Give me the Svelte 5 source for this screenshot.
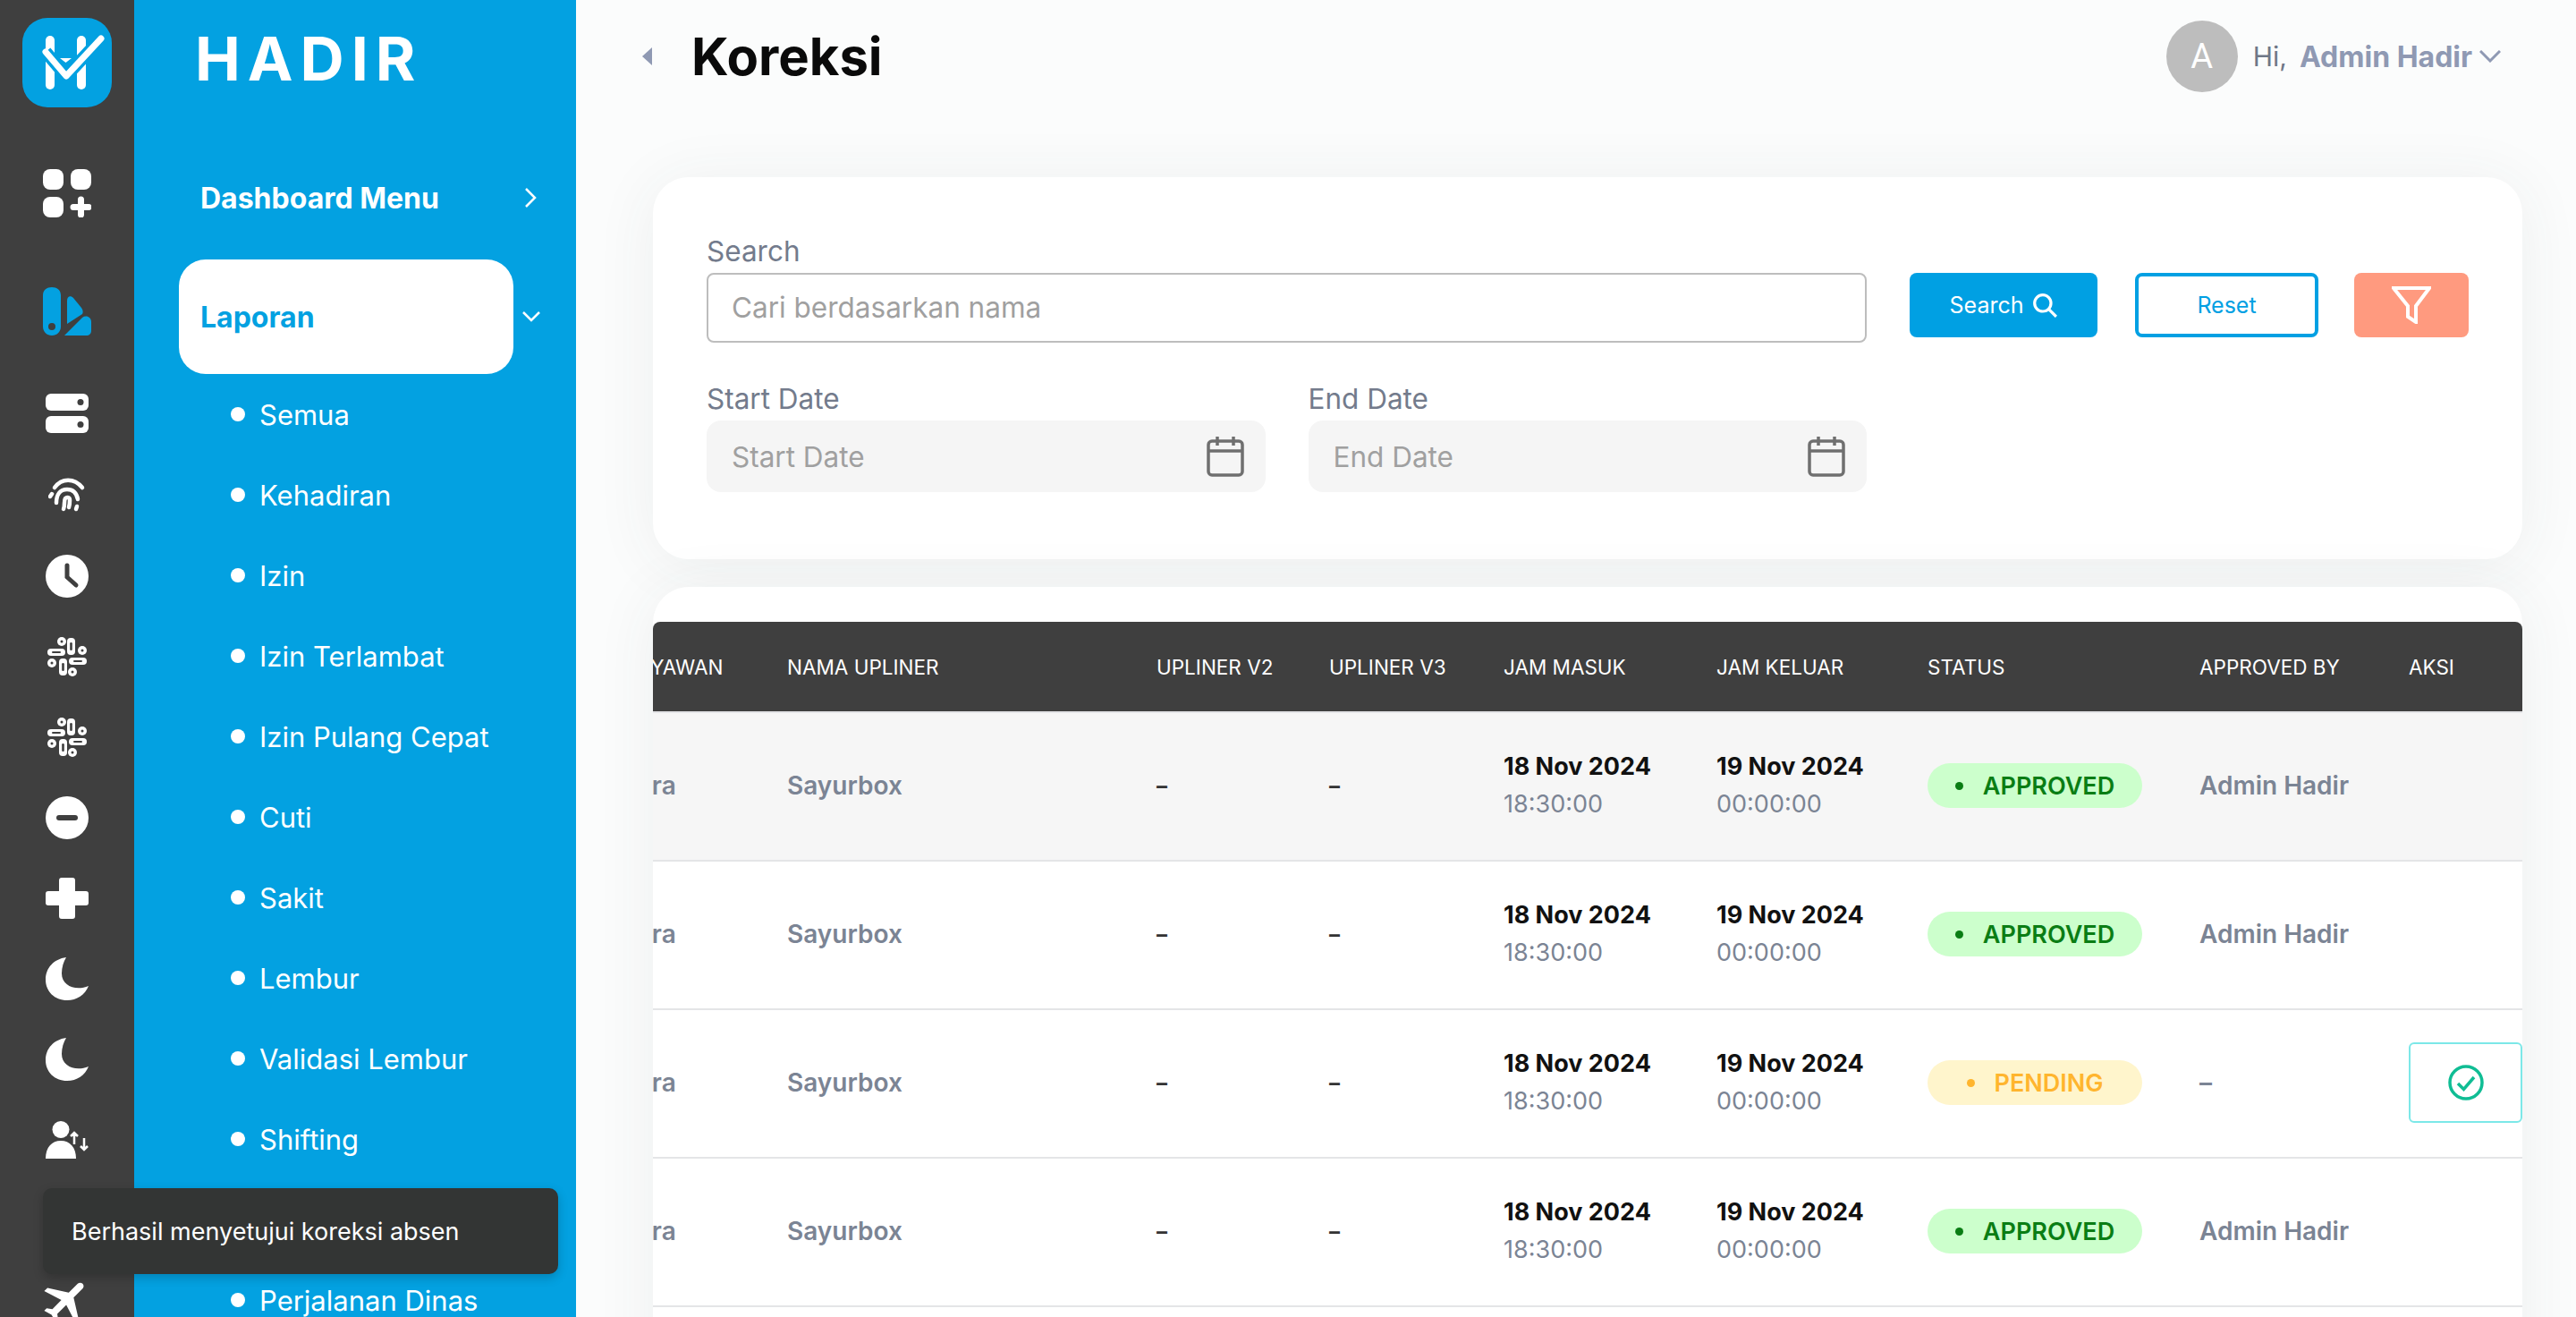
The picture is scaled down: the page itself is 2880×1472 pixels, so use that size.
<script>
  const submenu = ['Semua', 'Kehadiran', 'Izin', 'Izin Terlambat', 'Izin Pulang Cepat', 'Cuti', 'Sakit', 'Lembur', 'Validasi Lembur', 'Shifting', '', 'Perjalanan Dinas'];
  const rows = [
    { status: 'APPROVED', by: 'Admin Hadir' },
    { status: 'APPROVED', by: 'Admin Hadir' },
    { status: 'PENDING', by: '–' },
    { status: 'APPROVED', by: 'Admin Hadir' },
    { status: 'APPROVED', by: 'Admin Hadir' }
  ];
  const slackPills = [
    [22, 1, 9, 19], [24, 23, 20, 8], [13, 24, 9, 19], [0, 13, 20, 8]
  ];
  const slackDots = [[16, 5], [39, 15], [28, 39], [5, 29]];
</script>

{#snippet slack()}
  <svg class="ic" width="44" height="44" viewBox="0 0 44 44">
    {#each slackPills as p}
      <rect x={p[0]} y={p[1]} width={p[2]} height={p[3]} rx="4" fill="#fff" />
      {#if p[2] < p[3]}
        <rect x={p[0] + 3.2} y={p[1] + 5} width="2.6" height={p[3] - 10} rx="1.3" fill="#3f3f3f" />
      {:else}
        <rect x={p[0] + 5} y={p[1] + 2.9} width={p[2] - 10} height="2.2" rx="1.1" fill="#3f3f3f" />
      {/if}
    {/each}
    {#each slackDots as d}
      <circle cx={d[0]} cy={d[1]} r="5" fill="#fff" />
      <circle cx={d[0]} cy={d[1]} r="1.5" fill="#3f3f3f" />
    {/each}
  </svg>
{/snippet}

{#snippet moon()}
  <svg class="ic" width="48" height="48" viewBox="0 0 48 48">
    <path d="M23 0C9 2 0 12 0 25c0 13 10 23 24 23 11 0 20-6 24-16-14 6-30 0-30-14 0-7 2-13 5-18z" fill="#fff" />
  </svg>
{/snippet}

{#snippet calendar()}
  <svg width="42" height="46" viewBox="0 0 42 46" fill="none" stroke="#6f6f6f" stroke-width="3.5">
    <rect x="2" y="6" width="38" height="38" rx="4" />
    <path d="M2 17h38M12 1v10M30 1v10" />
  </svg>
{/snippet}

<div class="app">
  <nav class="rail">
    <div class="logo">
      <svg width="100" height="100" viewBox="0 0 100 100">
        <rect x="26" y="20" width="10" height="60" rx="5" fill="#fff" />
        <rect x="61" y="20" width="10" height="60" rx="5" fill="#fff" />
        <path d="M42 45h13l-6.500 5z" fill="#fff" />
        <path d="M26 38l23 27 39-42" fill="none" stroke="#03a1e1" stroke-width="14" />
        <path d="M26 38l23 27 39-42" fill="none" stroke="#fff" stroke-width="7" stroke-linecap="round" stroke-linejoin="round" />
      </svg>
    </div>
    <div class="cell first">
      <svg class="ic" width="54" height="54" viewBox="0 0 54 54" fill="#fff">
        <rect width="23" height="23" rx="8" />
        <rect x="31" width="23" height="23" rx="8" />
        <rect y="31" width="23" height="23" rx="8" />
        <path d="M42.500 34v17M34 42.500h17" stroke="#fff" stroke-width="7" stroke-linecap="round" />
      </svg>
    </div>
    <div class="cell second">
      <svg class="ic" width="54" height="54" viewBox="0 0 54 54" fill="#03a1e1">
        <path fill-rule="evenodd" d="M10 0c5.500 0 10 3 10 9v35c0 6-4.500 10-10 10S0 50 0 44V9c0-6 4.500-9 10-9zm0 40a4 4 0 100 8 4 4 0 000-8z" />
        <path d="M27 15c0-5 4-6 7-3l9 11c2 3 2 5 1 7L27 41z" />
        <path d="M24 54l20-20c4-3 10-1 10 5v9c0 4-2 6-6 6z" />
      </svg>
    </div>
    <div class="cell third">
      <svg class="ic" width="48" height="44" viewBox="0 0 48 44">
        <rect width="48" height="19" rx="6" fill="#fff" />
        <rect y="25" width="48" height="19" rx="6" fill="#fff" />
        <circle cx="39" cy="9.500" r="3.500" fill="#3f3f3f" />
        <circle cx="39" cy="34.500" r="3.500" fill="#3f3f3f" />
      </svg>
    </div>
    <div class="cell nudge">
      <svg class="ic" width="42" height="38" viewBox="0 0 42 38" fill="none" stroke="#fff" stroke-width="4.500" stroke-linecap="round">
        <path d="M7 11C15 0 29 0 38 11" />
        <path d="M2 21l2-3" />
        <path d="M9 28c0-9 4-15 12-15s11 6 12 11" />
        <path d="M17 35c2-5 0-9 2-12 2-2 5-1 5 2s0 5-1 8" />
        <path d="M31 35l1-3" />
      </svg>
    </div>
    <div class="cell nudge">
      <svg class="ic" width="48" height="48" viewBox="0 0 48 48">
        <circle cx="24" cy="24" r="24" fill="#fff" />
        <path d="M24 12v13l10 9" fill="none" stroke="#3f3f3f" stroke-width="5" stroke-linecap="round" />
      </svg>
    </div>
    <div class="cell">{@render slack()}</div>
    <div class="cell">{@render slack()}</div>
    <div class="cell">
      <svg class="ic" width="48" height="48" viewBox="0 0 48 48">
        <circle cx="24" cy="24" r="24" fill="#fff" />
        <rect x="12" y="21" width="24" height="6" rx="3" fill="#3f3f3f" />
      </svg>
    </div>
    <div class="cell">
      <svg class="ic" width="48" height="46" viewBox="0 0 48 46">
        <path d="M15 3c0-2 1-3 3-3h12c2 0 3 1 3 3v12h12c2 0 3 1 3 3v10c0 2-1 3-3 3H33v12c0 2-1 3-3 3H18c-2 0-3-1-3-3V31H3c-2 0-3-1-3-3V18c0-2 1-3 3-3h12z" fill="#fff" />
      </svg>
    </div>
    <div class="cell">{@render moon()}</div>
    <div class="cell">{@render moon()}</div>
    <div class="cell">
      <svg class="ic" width="48" height="42" viewBox="0 0 48 42" fill="#fff">
        <circle cx="17" cy="9.500" r="9.500" />
        <path d="M0 42c0-13 7-20 17-20s17 7 17 20z" />
        <path d="M32 26V13M28 17l4-4 4 4M43 19v13M39 28l4 4 4-4" fill="none" stroke="#fff" stroke-width="2.500" />
      </svg>
    </div>
    <div class="cell"></div>
    <div class="cell">
      <svg class="ic" width="62" height="62" viewBox="0 0 24 24">
        <path transform="rotate(45 12 12)" d="M21 16v-2l-8-5V3.500c0-.83-.67-1.500-1.500-1.500S10 2.670 10 3.500V9l-8 5v2l8-2.500V19l-2 1.500V22l3.500-1 3.500 1v-1.500L13 19v-5.500l8 2.500z" fill="#fff" />
      </svg>
    </div>
  </nav>

  <aside class="side">
    <div class="brand">HADIR</div>
    <div class="menu-row">
      <span class="menu-label">Dashboard Menu</span>
      <svg class="chev" width="14" height="24" viewBox="0 0 14 24" fill="none" stroke="#fff" stroke-width="2.500"><path d="M2 2l10 10L2 22" /></svg>
    </div>
    <div class="menu-row open">
      <span class="pill">Laporan</span>
      <svg class="chev" width="20" height="12" viewBox="0 0 20 12" fill="none" stroke="#fff" stroke-width="2.500"><path d="M1 1l9 9 9-9" /></svg>
    </div>
    <ul class="sub">
      {#each submenu as item}
        <li><span class="dot"></span>{item}</li>
      {/each}
    </ul>
  </aside>

  <main class="main">
    <header class="top">
      <span class="back"></span>
      <h1>Koreksi</h1>
      <div class="user">
        <span class="avatar">A</span>
        <span class="hi">Hi,</span>
        <span class="name">Admin Hadir</span>
        <svg width="24" height="14" viewBox="0 0 24 14" fill="none" stroke="#8f99b3" stroke-width="3"><path d="M1 1l11 11L23 1" /></svg>
      </div>
    </header>

    <section class="card filters">
      <div class="fields">
        <label class="field">
          <span>Search</span>
          <input class="search" placeholder="Cari berdasarkan nama" />
        </label>
        <div class="dates">
          <div class="field">
            <span>Start Date</span>
            <div class="date"><em>Start Date</em>{@render calendar()}</div>
          </div>
          <div class="field">
            <span>End Date</span>
            <div class="date"><em>End Date</em>{@render calendar()}</div>
          </div>
        </div>
      </div>
      <div class="actions">
        <button class="btn primary">
          Search
          <svg width="28" height="28" viewBox="0 0 26 26" fill="none" stroke="#fff" stroke-width="3"><circle cx="11" cy="11" r="8.500" /><path d="M17 17l8 8" /></svg>
        </button>
        <button class="btn outline">Reset</button>
        <button class="btn funnel" aria-label="Filter">
          <svg width="44" height="42" viewBox="0 0 44 42" fill="none" stroke="#fff" stroke-width="4"><path d="M2 2h40L27 22v18l-9-6V22z" /></svg>
        </button>
      </div>
    </section>

    <section class="card listing">
      <div class="scroller">
        <table>
          <colgroup>
            <col style="width:272px" /><col style="width:413px" /><col style="width:193px" /><col style="width:195px" /><col style="width:238px" /><col style="width:236px" /><col style="width:304px" /><col style="width:234px" /><col style="width:127px" />
          </colgroup>
          <thead>
            <tr>
              <th>NAMA KARYAWAN</th><th>NAMA UPLINER</th><th>UPLINER V2</th><th>UPLINER V3</th><th>JAM MASUK</th><th>JAM KELUAR</th><th>STATUS</th><th>APPROVED BY</th><th>AKSI</th>
            </tr>
          </thead>
          <tbody>
            {#each rows as row, i}
              <tr class:shade={i === 0}>
                <td class="muted">Aji Saputra</td>
                <td class="muted">Sayurbox</td>
                <td class="dash">–</td>
                <td class="dash">–</td>
                <td><b>18 Nov 2024</b><small>18:30:00</small></td>
                <td><b>19 Nov 2024</b><small>00:00:00</small></td>
                <td>
                  <span class="status" class:pending={row.status === 'PENDING'}><i></i>{row.status}</span>
                </td>
                <td class="muted">{row.by}</td>
                <td>
                  {#if row.status === 'PENDING'}
                    <button class="approve" aria-label="Setujui">
                      <svg width="40" height="40" viewBox="0 0 40 40" fill="none" stroke="#10bd94" stroke-width="3.500"><circle cx="20" cy="20" r="18" /><path d="M11 21l6.500 6.500L29 14" /></svg>
                    </button>
                  {/if}
                </td>
              </tr>
            {/each}
          </tbody>
        </table>
      </div>
    </section>
  </main>

  <div class="toast">Berhasil menyetujui koreksi absen</div>
</div>

<style>
  :global(body) {
    font-family: 'Inter', sans-serif;
    background: #fbfcfc;
  }

  .app {
    display: flex;
    height: 100vh;
    overflow: hidden;
    position: relative;
  }

  /* icon rail */
  .rail {
    width: 150px;
    flex: none;
    background: #3f3f3f;
    display: flex;
    flex-direction: column;
    align-items: center;
    padding-top: 20px;
  }

  .logo {
    width: 100px;
    height: 100px;
    flex: none;
    background: #03a1e1;
    border-radius: 28px;
  }

  .cell {
    height: 90px;
    flex: none;
    display: flex;
    align-items: center;
    justify-content: center;
  }

  .cell.first { margin-top: 51px; }
  .cell.second { margin-top: 42px; }
  .cell.third { margin-top: 24px; }
  .cell.nudge { margin-top: 1px; }

  .ic { display: block; }

  /* blue menu */
  .side {
    width: 494px;
    flex: none;
    background: #03a1e1;
    color: #fff;
  }

  .brand {
    height: 132px;
    padding: 24px 0 0 68px;
    box-sizing: border-box;
    font-size: 68px;
    line-height: 82px;
    font-weight: 700;
    letter-spacing: 8px;
  }

  .menu-row {
    display: flex;
    align-items: center;
    height: 178px;
    margin-bottom: -20px;
    padding-left: 74px;
    position: relative;
    box-sizing: border-box;
  }

  .menu-row.open {
    height: 128px;
    padding-left: 50px;
    margin-bottom: 0;
  }

  .menu-label {
    font-size: 32px;
    font-weight: 700;
  }

  .pill {
    width: 374px;
    height: 128px;
    box-sizing: border-box;
    padding-left: 24px;
    display: flex;
    align-items: center;
    background: #fff;
    color: #03a1e1;
    border-radius: 30px;
    font-size: 32px;
    font-weight: 700;
  }

  .chev {
    position: absolute;
    left: 436px;
    top: 50%;
    transform: translateY(-50%);
  }

  .menu-row.open .chev { left: 434px; }

  .sub {
    list-style: none;
    margin: 0;
    padding: 0 0 0 108px;
  }

  .sub li {
    height: 90px;
    display: flex;
    align-items: center;
    font-size: 31px;
  }

  .dot {
    width: 16px;
    height: 16px;
    border-radius: 50%;
    background: #fff;
    margin-right: 16px;
  }

  /* main column */
  .main {
    flex: 1;
    min-width: 0;
    padding: 0 60px 0 86px;
  }

  .top {
    height: 126px;
    display: flex;
    align-items: center;
    margin-bottom: 72px;
    margin-left: -12px;
    margin-right: 24px;
  }

  .back {
    width: 0;
    height: 0;
    border: 10px solid transparent;
    border-left: 0;
    border-right: 11px solid #8f99b3;
    margin-right: 44px;
  }

  h1 {
    margin: 0;
    font-size: 58px;
    font-weight: 700;
    color: #0a0a0a;
  }

  .user {
    margin-left: auto;
    display: flex;
    align-items: center;
    font-size: 32px;
  }

  .avatar {
    width: 80px;
    height: 80px;
    border-radius: 50%;
    background: #bdbdbd;
    color: #fff;
    display: flex;
    align-items: center;
    justify-content: center;
    font-family: 'Roboto', sans-serif;
    font-size: 38px;
    margin-right: 17px;
  }

  .hi {
    color: #6f7787;
    font-size: 30px;
    margin-right: 14px;
  }

  .name {
    color: #8f99b3;
    font-weight: 700;
    margin-right: 8px;
  }

  .card {
    background: #fff;
    border-radius: 40px;
    box-shadow: 0 6px 70px rgba(60, 70, 70, 0.07);
  }

  .filters {
    height: 427px;
    box-sizing: border-box;
    padding: 65px 60px 0;
    display: flex;
    justify-content: space-between;
    margin-bottom: 31px;
  }

  .fields {
    width: 1297px;
    display: flex;
    flex-direction: column;
    gap: 45px;
  }

  .field {
    display: flex;
    flex-direction: column;
    gap: 6px;
  }

  .field > span {
    font-size: 31.5px;
    line-height: 36px;
    color: #737b8c;
  }

  .search {
    height: 78px;
    box-sizing: border-box;
    border: 2px solid #bdbdbd;
    border-radius: 8px;
    padding: 0 26px 2px;
    font: 31.5px 'Inter', sans-serif;
    outline: none;
  }

  .search::placeholder { color: #a0a0a0; opacity: 1; }

  .dates {
    display: flex;
    gap: 48px;
  }

  .dates .field { flex: 1; }

  .date {
    height: 80px;
    background: #f5f5f5;
    border-radius: 16px;
    padding: 0 24px 0 28px;
    display: flex;
    align-items: center;
    justify-content: space-between;
  }

  .date em {
    font-style: normal;
    font-size: 31.5px;
    color: #a0a0a0;
  }

  .actions {
    display: flex;
    gap: 40px;
    margin-top: 42px;
    align-items: flex-start;
  }

  .btn {
    height: 72px;
    width: 205px;
    box-sizing: border-box;
    border-radius: 8px;
    border: 0;
    font: 25px 'Inter', sans-serif;
    display: flex;
    align-items: center;
    justify-content: center;
    gap: 10px;
  }

  .primary {
    width: 210px;
    background: #00a0e3;
    color: #fff;
  }

  .outline {
    background: #fff;
    border: 4px solid #00a0e3;
    color: #00a0e3;
    margin-left: 2px;
  }

  .funnel {
    width: 128px;
    background: #ff9a7f;
  }

  .listing {
    padding-top: 39px;
    height: 900px;
    border-bottom-left-radius: 0;
    border-bottom-right-radius: 0;
  }

  .scroller {
    overflow: hidden;
    border-radius: 8px 8px 0 0;
  }

  table {
    table-layout: fixed;
    border-collapse: collapse;
    width: 2212px;
    margin-left: -122px;
  }

  th {
    background: #3f3f3f;
    color: #fff;
    height: 100px;
    padding: 0;
    text-align: left;
    font-size: 22.5px;
    font-weight: 400;
    white-space: nowrap;
  }

  td {
    height: 166px;
    padding: 0 0 2px;
    box-sizing: border-box;
    border-bottom: 2px solid #e4e5e7;
    border-top: 2px solid #e4e5e7;
    font-size: 27px;
    white-space: nowrap;
    vertical-align: middle;
  }

  tr.shade td { background: #f6f6f6; }

  .muted {
    font-size: 28px;
    font-weight: 600;
    color: #7b8494;
  }

  .dash {
    font-size: 24px;
    font-weight: 700;
    color: #333;
  }

  td b {
    display: block;
    font-weight: 700;
    color: #111;
    line-height: 42px;
  }

  td small {
    display: block;
    font-size: 27px;
    color: #7b8494;
    line-height: 42px;
  }

  .status {
    width: 240px;
    height: 50px;
    border-radius: 25px;
    background: #ccffcc;
    color: #0a7d14;
    font-weight: 600;
    display: flex;
    align-items: center;
    justify-content: center;
    gap: 22px;
  }

  .status i {
    width: 9px;
    height: 9px;
    border-radius: 50%;
    background: currentColor;
  }

  .status.pending {
    background: #fff5cc;
    color: #ffb52e;
  }

  .approve {
    width: 127px;
    height: 90px;
    display: flex;
    align-items: center;
    justify-content: center;
    background: #fff;
    border: 2px solid #7ce8e8;
    border-radius: 6px;
    padding: 0;
  }

  .toast {
    position: absolute;
    left: 48px;
    top: 1328px;
    width: 576px;
    height: 96px;
    box-sizing: border-box;
    padding-left: 32px;
    display: flex;
    align-items: center;
    background: #333534;
    color: #fff;
    border-radius: 10px;
    font-size: 27px;
    box-shadow: 0 4px 12px rgba(0, 0, 0, 0.2);
  }
</style>
